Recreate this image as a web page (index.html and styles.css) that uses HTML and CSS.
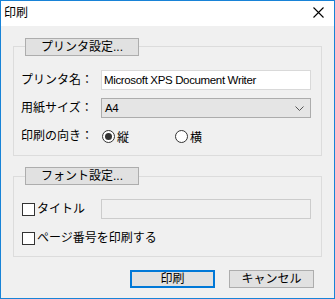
FILE: index.html
```html
<!DOCTYPE html>
<html lang="ja">
<head>
<meta charset="utf-8">
<title>印刷</title>
<link rel="stylesheet" href="styles.css">
</head>
<body>
<div class="window">
  <div class="titlebar">
    <span class="title">印刷</span>
    <svg class="close" width="11" height="11" viewBox="0 0 11 11"><path d="M0.5 0.5 L10.5 10.5 M10.5 0.5 L0.5 10.5" stroke="#000" stroke-width="1.1" fill="none"/></svg>
  </div>
  <div class="content">
    <div class="group g1">
      <div class="btn legend">プリンタ設定...</div>
      <div class="form">
        <div class="label">プリンタ名：</div>
        <div class="textbox"><span class="value">Microsoft XPS Document Writer</span></div>
        <div class="label">用紙サイズ：</div>
        <div class="select"><span class="value">A4</span><svg width="9" height="5" viewBox="0 0 9 5"><path d="M0.5 0.5 L4.5 4.5 L8.5 0.5" stroke="#555" stroke-width="1" fill="none"/></svg></div>
        <div class="label">印刷の向き：</div>
        <div class="radios">
          <div class="radio on"><span class="circle"><span class="dot"></span></span><span>縦</span></div>
          <div class="radio"><span class="circle"></span><span>横</span></div>
        </div>
      </div>
    </div>
    <div class="group g2">
      <div class="btn legend">フォント設定...</div>
      <div class="form2">
        <div class="check"><span class="box"></span><span>タイトル</span></div>
        <div class="textbox disabled"></div>
        <div class="check wide"><span class="box"></span><span>ページ番号を印刷する</span></div>
      </div>
    </div>
    <div class="actions">
      <div class="btn default">印刷</div>
      <div class="btn">キャンセル</div>
    </div>
  </div>
</div>
</body>
</html>
```
FILE: styles.css
```css
* { box-sizing: border-box; }
html, body { margin: 0; padding: 0; }
body {
  font-family: "Liberation Sans", "Noto Sans CJK JP", sans-serif;
  font-size: 12px;
  color: #000;
  background: #f0f0f0;
}
.window {
  width: 335px;
  height: 299px;
  border: 1px solid #1883d7;
  background: #f0f0f0;
  display: flex;
  flex-direction: column;
}
.titlebar {
  height: 25px;
  background: #fff;
  display: flex;
  align-items: center;
  justify-content: space-between;
  padding-left: 3px;
  padding-right: 10px;
  flex: none;
}
.title { line-height: 14px; margin-top: -2px; }
.close { margin-top: -3px; }
.content {
  padding: 0 12px;
  display: flex;
  flex-direction: column;
}
.group {
  border: 1px solid #dcdcdc;
  display: flex;
  flex-direction: column;
  align-items: flex-start;
}
.g1 { margin-top: 20px; padding-bottom: 9px; }
.g2 { margin-top: 20px; padding-bottom: 8px; }
.btn {
  height: 18px;
  width: 85px;
  background: #e1e1e1;
  border: 1px solid #adadad;
  display: flex;
  align-items: center;
  justify-content: center;
  line-height: 14px;
}
.btn.legend {
  width: 114px;
  margin-left: 11px;
}
.g1 .legend { margin-top: -9px; }
.g2 .legend { margin-top: -10px; }
.btn.default { border: 2px solid #0078d7; }
.form {
  margin-top: 14px;
  padding-left: 7px;
  display: grid;
  grid-template-columns: 80px 210px;
  grid-auto-rows: 20px;
  row-gap: 8px;
  align-items: center;
}
.label { line-height: 14px; }
.value { font-size: 11.5px; letter-spacing: -0.35px; }
.textbox {
  height: 20px;
  background: #fff;
  border: 1px solid #d9d9d9;
  display: flex;
  align-items: center;
  padding-left: 2px;
  line-height: 14px;
}
.textbox.disabled { background: #f0f0f0; border-color: #cccccc; }
.select {
  height: 20px;
  background: #e5e5e5;
  border: 1px solid #acacac;
  display: flex;
  align-items: center;
  justify-content: space-between;
  padding-left: 3px;
  padding-right: 6px;
  line-height: 14px;
}
.radios { display: flex; align-items: center; }
.radio { display: flex; align-items: center; gap: 2px; width: 72px; margin-left: 1px; }
.circle {
  width: 13px;
  height: 13px;
  border-radius: 50%;
  border: 1px solid #333;
  background: #fff;
  display: flex;
  align-items: center;
  justify-content: center;
}
.dot { width: 7px; height: 7px; border-radius: 50%; background: #333; }
.form2 {
  margin-top: 14px;
  padding-left: 8px;
  display: grid;
  grid-template-columns: 79px 210px;
  grid-auto-rows: 20px;
  row-gap: 9px;
  align-items: center;
}
.check { display: flex; align-items: center; gap: 2px; line-height: 14px; }
.check.wide { grid-column: 1 / span 2; }
.box {
  width: 13px;
  height: 13px;
  border: 1px solid #333;
  background: #fff;
}
.actions {
  margin-top: 13px;
  display: flex;
  justify-content: flex-end;
  gap: 14px;
  padding-right: 8px;
}
```
